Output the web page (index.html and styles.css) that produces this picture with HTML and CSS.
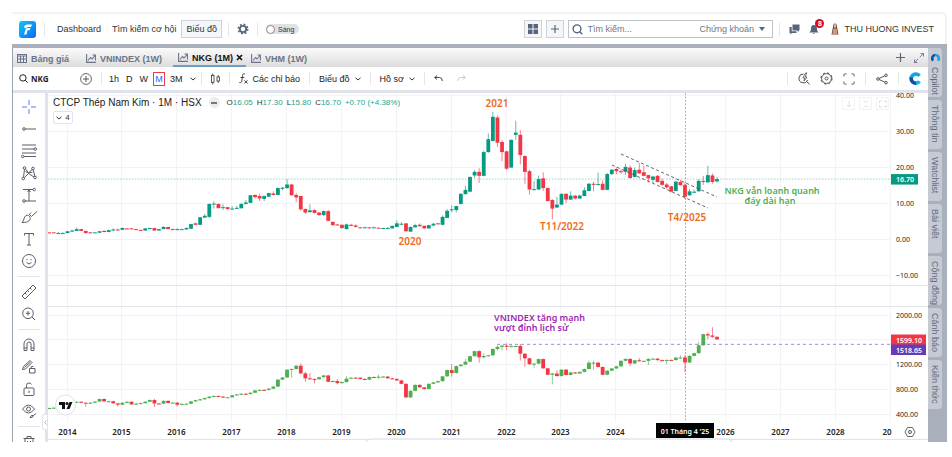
FILE: index.html
```html
<!DOCTYPE html>
<html lang="vi">
<head>
  <meta charset="UTF-8">
  <meta name="viewport" content="width=device-width, initial-scale=1">
  <title>NKG (1M) - Biểu đồ</title>
  <link rel="stylesheet" href="styles.css">
</head>
<body>
  <div class="app">
    <!-- Top bar -->
    <header class="topbar">
      <a href="#" class="logo" aria-label="Trang chủ">
        <svg width="17" height="17" viewBox="0 0 17 17">
          <defs>
            <linearGradient id="logo-bg" x1="0" y1="0" x2="1" y2="1">
              <stop offset="0" stop-color="#12c4fb"/>
              <stop offset="1" stop-color="#0a6cf5"/>
            </linearGradient>
          </defs>
          <rect width="17" height="17" rx="3" fill="url(#logo-bg)"/>
          <path d="M5 6.500C5.300 4.500 6.500 3.500 8.500 3.500H13L12 6H8.500L7 7.500ZM6.500 8.500L8 7H11.500L10.500 9.300H8.500L7.500 13.500H5Z" fill="#fff"/>
        </svg>
      </a>
      <span class="divider"></span>
      <nav class="main-nav">
        <a href="#">Dashboard</a>
        <a href="#">Tìm kiếm cơ hội</a>
        <a href="#" class="current">Biểu đồ</a>
      </nav>
      <span class="divider"></span>
      <button class="icon-button gear" aria-label="Cài đặt">
        <svg width="12" height="12" viewBox="0 0 12 12" fill="none" stroke="#56657f">
          <circle cx="6" cy="6" r="3.200" stroke-width="1.800"/>
          <circle cx="6" cy="6" r="4.700" stroke-width="1.600" stroke-dasharray="1.850 1.840"/>
        </svg>
      </button>
      <span class="divider"></span>
      <label class="theme"><input type="checkbox"><span>Sáng</span></label>

      <div class="topbar-right">
        <button class="square" aria-label="Bố cục">
          <svg width="10" height="10" viewBox="0 0 10 10" fill="#56657f">
            <rect width="4.500" height="4.500"/><rect x="5.500" width="4.500" height="4.500"/>
            <rect y="5.500" width="4.500" height="4.500"/><rect x="5.500" y="5.500" width="4.500" height="4.500"/>
          </svg>
        </button>
        <button class="square" aria-label="Thêm">
          <svg width="8" height="8" viewBox="0 0 8 8" stroke="#56657f" stroke-width="1.200"><path d="M4 0V8M0 4H8"/></svg>
        </button>
        <div class="search">
          <svg width="11" height="11" viewBox="0 0 11 11" fill="none" stroke="#56657f" stroke-width="1.400"><circle cx="5" cy="4.800" r="3.900"/><path d="M7.500 7.500L10.300 10.300"/></svg>
          <input type="text" placeholder="Tìm kiếm..." aria-label="Tìm kiếm">
          <select aria-label="Loại"><option>Chứng khoán</option></select>
          <svg class="caret" width="6" height="4" viewBox="0 0 6 4" fill="#56657f"><path d="M0 0H6L3 4Z"/></svg>
        </div>
        <span class="divider"></span>
        <button class="icon-button chat" aria-label="Tin nhắn">
          <svg width="11" height="11" viewBox="0 0 11 11" fill="#56657f"><path d="M3.500 0.500H10.500V6.500H9.500V8L8 6.500H3.500Z"/><path d="M0.500 3H2.700V7.300H7.500V9H3L1.500 10.500V9H0.500Z"/></svg>
        </button>
        <button class="icon-button bell" aria-label="Thông báo">
          <svg width="10" height="11" viewBox="0 0 10 11" fill="#56657f"><path d="M5 1C7.300 1 8 2.800 8 4.500C8 6.800 8.600 7.500 9.600 8.500H0.400C1.400 7.500 2 6.800 2 4.500C2 2.800 2.700 1 5 1ZM3.800 9.300H6.200C6 10.300 4 10.300 3.800 9.300Z"/></svg>
          <span class="badge">8</span>
        </button>
        <button class="user">
          <svg width="10" height="12" viewBox="0 0 10 12"><path d="M3 4Q3 0.500 5 0.500Q7 0.500 7 4L8.500 11.500H1.500Z" fill="#5b4038"/><ellipse cx="5" cy="3" rx="1.400" ry="1.900" fill="#dfb49a"/><path d="M3.200 6Q5 4.500 6.800 6L7.500 11.500H2.300Z" fill="#d19a7c"/></svg>
          THU HUONG INVEST
        </button>
      </div>
    </header>

    <div class="workspace">
      <main class="board">
        <!-- Symbol tabs -->
        <div class="tabs">
          <a href="#" class="tab first">
            <svg width="10" height="9" viewBox="0 0 10 9" fill="none" stroke="#6a7488"><rect x="0.500" y="0.500" width="9" height="8"/><path d="M0 2H10M0 5H10M3.500 2V9M6.500 2V9"/></svg>
            Bảng giá
          </a>
          <a href="#" class="tab">
            <svg width="10" height="9" viewBox="0 0 10 9"><use href="#tab-chart"/></svg>
            VNINDEX (1W)
          </a>
          <a href="#" class="tab active">
            <svg width="10" height="9" viewBox="0 0 10 9"><use href="#tab-chart"/></svg>
            NKG (1M)
            <svg class="close" width="7" height="7" viewBox="0 0 7 7" stroke="#111" stroke-width="1.600"><path d="M1 1L6 6M6 1L1 6"/></svg>
          </a>
          <a href="#" class="tab">
            <svg width="10" height="9" viewBox="0 0 10 9"><use href="#tab-chart"/></svg>
            VHM (1W)
          </a>
          <div class="tabs-right">
            <button class="icon-button" aria-label="Thêm tab"><svg width="9" height="9" viewBox="0 0 9 9" stroke="#5c6679" stroke-width="1.200"><path d="M4.500 0V9M0 4.500H9"/></svg></button>
            <button class="icon-button" aria-label="Phóng to"><svg width="10" height="10" viewBox="0 0 10 10" fill="none" stroke="#6a7488" stroke-width="0.900"><path d="M6.500 0.500H9.500V3.500M9.500 0.500L5.800 4.200M0.500 6.500V9.500H3.500M0.500 9.500L4 6"/></svg></button>
          </div>
        </div>

        <!-- Chart toolbar -->
        <div class="toolbar">
          <button class="symbol"><svg width="9" height="9" viewBox="0 0 9 9" fill="none" stroke="#222" stroke-width="1"><circle cx="3.900" cy="3.900" r="3.200"/><path d="M6.200 6.200L8.700 8.700"/></svg>NKG</button>
          <button class="compare" aria-label="So sánh"><svg width="12" height="12" viewBox="0 0 12 12" fill="none" stroke="#444"><circle cx="6" cy="6" r="5.400" stroke-width="0.800"/><path d="M6 3V9M3 6H9" stroke-width="0.900"/></svg></button>
          <span class="divider"></span>
          <div class="intervals">
            <button>1h</button>
            <button>D</button>
            <button>W</button>
            <button class="selected">M</button>
            <button>3M</button>
            <button aria-label="Khung khác"><svg width="6" height="4" viewBox="0 0 6 4"><use href="#chevron"/></svg></button>
          </div>
          <span class="divider"></span>
          <button class="pad" aria-label="Kiểu nến"><svg width="9" height="12" viewBox="0 0 9 12" fill="none" stroke="#333" stroke-width="0.800"><rect x="0.500" y="2.500" width="2.500" height="7"/><path d="M1.700 0.500V2.500M1.700 9.500V11.500M7.200 2V4M7.200 8V10"/><rect x="6" y="4" width="2.500" height="4"/></svg></button>
          <span class="divider"></span>
          <button class="pad"><svg width="9" height="11" viewBox="0 0 9 11" fill="none" stroke="#333" stroke-width="0.900"><path d="M6 1C4.500 0.300 3.700 1 3.500 2.500L2.800 8C2.600 9.500 1.500 10 0.300 9.500M1.500 4.500H5.300M5.500 7.300L8.500 10.500M8.500 7.300L5.500 10.500"/></svg>Các chỉ báo</button>
          <span class="divider"></span>
          <button class="pad">Biểu đồ<svg width="6" height="4" viewBox="0 0 6 4"><use href="#chevron"/></svg></button>
          <span class="divider"></span>
          <button class="pad">Hồ sơ<svg width="6" height="4" viewBox="0 0 6 4"><use href="#chevron"/></svg></button>
          <span class="divider"></span>
          <button class="pad" aria-label="Hoàn tác"><svg width="9" height="7" viewBox="0 0 9 7" fill="none" stroke="#333" stroke-width="0.900"><path d="M3 0.500L0.700 2.500L3 4.500M0.700 2.500H5.500Q8.300 2.500 8.300 6"/></svg></button>
          <button class="redo" aria-label="Làm lại"><svg width="9" height="7" viewBox="0 0 9 7" fill="none" stroke="#c3c5cb" stroke-width="0.900"><path d="M6 0.500L8.300 2.500L6 4.500M8.300 2.500H3.500Q0.700 2.500 0.700 6"/></svg></button>

          <div class="toolbar-right">
            <span class="divider"></span>
            <button aria-label="Tìm nhanh"><svg width="12" height="13" viewBox="0 0 12 13" fill="none" stroke="#333" stroke-width="0.900"><path d="M5.500 2A4.400 4.400 0 1 0 9.500 8M8.500 9.500L11.500 12.300"/><path d="M7.800 0.800L4.800 6H6.800L6 9L9 5H7.200L8.700 0.800Z" stroke-width="0.700"/></svg></button>
            <button aria-label="Cài đặt biểu đồ"><svg width="13" height="13" viewBox="0 0 13 13" fill="none" stroke="#333"><circle cx="6.500" cy="6.500" r="4.900" stroke-width="0.800"/><circle cx="6.500" cy="6.500" r="5.600" stroke-width="0.900" stroke-dasharray="2.200 2.198"/><circle cx="6.500" cy="6.500" r="1.500" stroke-width="0.800"/></svg></button>
            <button aria-label="Toàn màn hình"><svg width="12" height="12" viewBox="0 0 12 12" fill="none" stroke="#444" stroke-width="0.900"><path d="M0.800 3.500V2.300Q0.800 0.800 2.300 0.800H3.500M8.500 0.800H9.700Q11.200 0.800 11.200 2.300V3.500M11.200 8.500V9.700Q11.200 11.200 9.700 11.200H8.500M3.500 11.200H2.300Q0.800 11.200 0.800 9.700V8.500"/></svg></button>
            <span class="divider"></span>
            <button aria-label="Chia sẻ"><svg width="12" height="12" viewBox="0 0 12 12" fill="none" stroke="#444" stroke-width="0.900"><circle cx="2" cy="6" r="1.300"/><circle cx="10" cy="2.300" r="1.300"/><circle cx="10" cy="9.700" r="1.300"/><path d="M3.200 5.400L8.800 2.900M3.200 6.600L8.800 9.100"/></svg></button>
            <span class="divider"></span>
            <button aria-label="Copilot"><svg width="13" height="13" viewBox="0 0 13 13" fill="none" stroke-width="3.600"><path d="M10.500 3.800A4.600 4.600 0 0 0 2.300 6.500" stroke="#12a5e0"/><path d="M2.300 5.500A4.600 4.600 0 0 0 7.500 11.100" stroke="#0d4fa8"/><path d="M7 11.100A4.600 4.600 0 0 0 10.500 9.200" stroke="#14b4e8"/></svg></button>
          </div>
        </div>

        <div class="chart-area">
          <!-- Drawing tools -->
          <div class="tools">
            <button aria-label="Con trỏ"><svg width="16" height="16" viewBox="0 0 16 16"><path d="M8 1V6M8 10V15M1 8H6M10 8H15"/></svg></button>
            <button aria-label="Đường xu hướng"><svg width="16" height="16" viewBox="0 0 16 16"><circle cx="3" cy="8" r="1.300"/><path d="M4.300 8H15"/></svg></button>
            <button aria-label="Fibonacci"><svg width="16" height="16" viewBox="0 0 16 16"><path d="M1 2H15M1 6H13M1 10H15M3 13.500H15"/><circle cx="14.200" cy="6" r="1.300"/><circle cx="1.700" cy="13.500" r="1.300"/></svg></button>
            <button aria-label="Mô hình"><svg width="16" height="16" viewBox="0 0 16 16"><path d="M3.500 4.300L2.500 12.200M4.500 4L7.500 7.800L11.200 4.500M12.300 4.800L13.800 11.200M3.300 12.700L7.500 8.500L13 12M4.500 6.500L7.500 8L11.500 7"/><circle cx="3.500" cy="3" r="1.300"/><circle cx="12" cy="3.500" r="1.300"/><circle cx="2.300" cy="13.500" r="1.300"/><circle cx="14" cy="12.500" r="1.300"/></svg></button>
            <button aria-label="Dự báo"><svg width="16" height="16" viewBox="0 0 16 16"><path d="M2 2.500H12M4 14H15M8 3V14M6.500 5L8 3L9.500 5"/><circle cx="13.200" cy="2.500" r="1.300"/><circle cx="3" cy="14" r="1.300"/></svg></button>
            <button aria-label="Cọ vẽ"><svg width="16" height="16" viewBox="0 0 16 16"><path d="M1 13.500C3 12.500 2.500 8 5 6.500C7.500 5.500 10 8 9 10.500C7.500 13.500 4 13.500 1 13.500ZM9 6L10.500 7.500L16 2.500M8 6L10 3.500"/></svg></button>
            <button aria-label="Văn bản"><svg width="16" height="16" viewBox="0 0 16 16"><path d="M3.500 4.500V2.500H12.500V4.500M8 2.500V14M6 14H10"/></svg></button>
            <button aria-label="Biểu tượng"><svg width="16" height="16" viewBox="0 0 16 16"><circle cx="8" cy="8" r="6.500"/><path d="M5.500 9.500Q8 12.500 10.500 9.500M6 6V7.300M10 6V7.300"/></svg></button>
            <hr>
            <button aria-label="Thước"><svg width="16" height="16" viewBox="0 0 16 16"><path d="M1 12L12 1L15 4L4 15ZM4 9L5.500 10.500M6.500 6.500L8 8M9 4L10.500 5.500"/></svg></button>
            <button aria-label="Phóng to"><svg width="16" height="16" viewBox="0 0 16 16"><circle cx="7" cy="7.300" r="5.300"/><path d="M11 11L14 14M7 5V9.500M4.800 7.300H9.200"/></svg></button>
            <hr>
            <button aria-label="Nam châm"><svg width="16" height="16" viewBox="0 0 16 16"><path d="M3 13.500V7A5 5 0 0 1 13 7V13.500H10V7A2 2 0 0 0 6 7V13.500ZM3 11H6M10 11H13"/></svg></button>
            <button aria-label="Giữ chế độ vẽ"><svg width="16" height="16" viewBox="0 0 16 16"><path d="M1.500 10.500L2.500 7.500L9 1.500L11 3.500L4.500 10ZM3.500 8.500L9.500 3M8.500 9.500H14V14H8.500ZM9.800 9.500Q9.800 6.500 12.300 7.500"/></svg></button>
            <button aria-label="Khóa"><svg width="16" height="16" viewBox="0 0 16 16"><rect x="3" y="7" width="10" height="7.500" rx="1"/><path d="M5.500 7V4.500Q5.500 2 8 2Q10 2 10.500 3.500M8 9.500V12"/></svg></button>
            <button aria-label="Ẩn hình vẽ"><svg width="16" height="16" viewBox="0 0 16 16"><path d="M1.500 6Q7.500 -2 13.500 6Q7.500 14 1.500 6ZM9 14.500Q10 11.500 12.500 12.500Q12 15 9 14.500ZM12.500 12.500L15 10.500"/><circle cx="7.500" cy="6" r="2"/></svg></button>
            <hr>
            <button aria-label="Xóa"><svg width="16" height="16" viewBox="0 0 16 16"><path d="M2.500 4.500H13.500M6 4.500V2.500H10V4.500M4 4.500V14H12V4.500M6.500 7V12M9.500 7V12"/></svg></button>
          </div>

          <div class="chart">
            <svg id="plot" viewBox="0 0 880 349" role="img" aria-label="NKG và VNINDEX"></svg>
            <div class="legend">
              <span class="legend-name">CTCP Thép Nam Kim · 1M · HSX</span>
              <span class="legend-chip"></span>
              <span class="ohlc">O<b>16.05</b></span>
              <span class="ohlc">H<b>17.30</b></span>
              <span class="ohlc">L<b>15.80</b></span>
              <span class="ohlc">C<b>16.70</b></span>
              <span class="ohlc"><b>+0.70 (+4.38%)</b></span>
            </div>
            <button class="collapse"><svg width="6" height="4" viewBox="0 0 6 4"><use href="#chevron"/></svg>4</button>
            <div class="pane-buttons">
              <button aria-label="Xuống"><svg width="8" height="8" viewBox="0 0 8 8"><path d="M4 1V7M2 5L4 7L6 5"/></svg></button>
              <button aria-label="Thu gọn"><svg width="8" height="8" viewBox="0 0 8 8"><path d="M2 0.500L4 2.500L6 0.500M2 7.500L4 5.500L6 7.500"/></svg></button>
              <button aria-label="Mở rộng"><svg width="8" height="8" viewBox="0 0 8 8"><path d="M0.500 3V1H3M5 1H7.500V3M7.500 5V7H5M3 7H0.500V5"/></svg></button>
            </div>
            <button class="handle" aria-label="Ẩn thanh công cụ"><svg width="3" height="5" viewBox="0 0 3 5" fill="none" stroke="#9aa0ad" stroke-width="0.800"><path d="M2.500 0.500L0.500 2.500L2.500 4.500"/></svg></button>
          </div>
        </div>
      </main>

      <!-- Right side panel tabs -->
      <aside class="side">
        <a href="#"><svg width="9" height="9" viewBox="0 0 9 9" fill="none" stroke-width="2.600"><path d="M2.200 7.500A3.200 3.200 0 0 1 4.500 2" stroke="#0d4fa8"/><path d="M4.300 2A3.200 3.200 0 0 1 6.800 7.500" stroke="#12a5e0"/></svg>Copilot</a>
        <a href="#">Thông tin</a>
        <a href="#">Watchlist</a>
        <a href="#">Bài viết</a>
        <a href="#">Cộng đồng</a>
        <a href="#">Cảnh báo</a>
        <a href="#">Kiến thức</a>
      </aside>
    </div>
  </div>

  <svg class="sprite" width="0" height="0">
    <symbol id="chevron" viewBox="0 0 6 4"><path d="M0.500 0.800L3 3L5.500 0.800" fill="none" stroke="#333" stroke-width="1"/></symbol>
    <symbol id="tab-chart" viewBox="0 0 10 9"><path d="M0.600 0V8.400H10M2 6.500L4.500 3.500L6 5L9 1.500M6.500 1H9.400V6.500" fill="none" stroke="#6a7488" stroke-width="1.100"/></symbol>
  </svg>
  <script src="chart.js"></script>
</body>
</html>
```

FILE: styles.css
```css
* {
  box-sizing: border-box;
}
body {
  margin: 0;
  background: #fff;
  color: #333;
  font-family: "Liberation Sans", Arial, sans-serif;
  font-size: 9px;
}
a {
  color: inherit;
  text-decoration: none;
}
button {
  display: flex;
  align-items: center;
  justify-content: center;
  padding: 0;
  border: none;
  background: none;
  color: inherit;
  font: inherit;
  cursor: pointer;
}
svg {
  display: block;
  flex: none;
}
.sprite {
  position: absolute;
}
.divider {
  flex: none;
  width: 1px;
  height: 13px;
  background: #e4e6ea;
}
.app {
  margin: 12px 5px 12px 12px;
}

/* Top bar */
.topbar {
  display: flex;
  align-items: center;
  height: 32px;
  padding: 0 11px 0 7px;
  border-top: 2px solid #f3f3f4;
  border-right: 2px solid #f3f3f4;
  border-radius: 0 5px 0 0;
}
.topbar .divider {
  margin: 0 8px;
}
.main-nav {
  display: flex;
  align-items: center;
  gap: 11px;
  margin-left: 4px;
}
.main-nav .current {
  margin: 0 -2px 0 -6px;
  padding: 3px 4px;
  border: 1px solid #cfd2d7;
  background: #f5f6f8;
}
.theme {
  display: flex;
  align-items: center;
  gap: 3px;
  width: 33px;
  height: 10px;
  border-radius: 5px;
  background: #dfe1e5;
  font-size: 7px;
}
.theme input {
  appearance: none;
  width: 9px;
  height: 9px;
  margin: 0;
  border: 1px solid #888;
  border-radius: 50%;
  background: #fff;
}
.topbar-right {
  display: flex;
  align-items: center;
  margin-left: auto;
}
.square {
  width: 18px;
  height: 18px;
  margin-right: 4px;
  border: 1px solid #cfd2d7;
  background: #f5f6f8;
}
.search {
  display: flex;
  align-items: center;
  width: 205px;
  height: 18px;
  padding: 0 7px 0 3px;
  border: 1px solid #bfc3ca;
}
.search input {
  flex: 1;
  min-width: 0;
  margin-left: 4px;
  padding: 0;
  border: none;
  background: none;
  font: inherit;
  outline: none;
}
.search input::placeholder {
  color: #6f7888;
}
.search select {
  appearance: none;
  padding: 0;
  border: none;
  background: none;
  color: #6f7888;
  font: inherit;
}
.search .caret {
  margin-left: 5px;
}
.topbar-right .divider {
  margin: 0 9px 0 6px;
}
.bell {
  position: relative;
  margin: 0 9px;
}
.badge {
  position: absolute;
  top: -5px;
  right: -5px;
  width: 9px;
  height: 9px;
  border-radius: 50%;
  background: #d40f16;
  color: #fff;
  font-size: 7px;
  font-weight: bold;
  line-height: 9px;
}
.user {
  gap: 4px;
  margin-left: 2px;
}

/* Workspace */
.workspace {
  display: grid;
  grid-template-columns: 1fr 19px;
  border-top: 4px solid #a9afbb;
  background: #a9afbb;
}
.board {
  min-width: 0;
  border-left: 1px solid #9aa1af;
  background: #fff;
}
.tabs {
  display: flex;
  height: 19px;
  background: linear-gradient(#fbfbfb, #dcdcdc);
  color: #6a7488;
  font-weight: bold;
}
.tab {
  display: flex;
  align-items: center;
  gap: 4px;
  padding: 2px 5px 0;
}
.tab.first {
  margin-right: 7px;
  padding-left: 4px;
}
.tab.active {
  margin-left: 6px;
  padding: 2px 3px 0 5px;
  border-bottom: 2px solid #6b9fc4;
  color: #111;
}
.tab.active .close {
  margin-left: -1px;
}
.tabs-right {
  display: flex;
  gap: 9px;
  margin-left: auto;
  padding-right: 4px;
}

/* Chart toolbar */
.toolbar {
  display: flex;
  align-items: center;
  height: 23px;
  color: #222;
}
.symbol {
  gap: 3px;
  width: 67px;
  padding-left: 6px;
  justify-content: flex-start;
  font: bold 8px "Noto Sans", sans-serif;
}
.compare {
  margin-right: 9px;
}
.intervals {
  display: flex;
  align-items: center;
  gap: 7px;
  padding: 0 5px 0 7px;
}
.intervals .selected {
  width: 12px;
  height: 14px;
  margin: 0 -2px;
  border: 1px solid #e93c46;
  color: #2962ff;
}
.pad {
  gap: 5px;
  padding: 0 9px;
}
.redo {
  margin-left: 5px;
}
.toolbar-right {
  display: flex;
  align-items: center;
  gap: 10px;
  margin-left: auto;
  padding-right: 6px;
}

/* Chart */
.chart-area {
  display: grid;
  grid-template-columns: 35px 1fr;
  border-top: 3px solid #e0e3eb;
}
.tools {
  display: flex;
  flex-direction: column;
  height: 0;
  min-height: 100%;
  padding-top: 3px;
  border-right: 3px solid #e0e3eb;
  overflow: hidden;
}
.tools button {
  flex: none;
  height: 22px;
}
.tools svg {
  fill: none;
  stroke: #5a5d66;
}
.tools button:first-child svg {
  stroke: #5b7cff;
}
.tools hr {
  flex: none;
  width: 22px;
  height: 1px;
  margin: 4px auto;
  border: none;
  background: #e0e3eb;
}
.chart {
  position: relative;
  min-width: 0;
}
#plot {
  width: 100%;
  height: auto;
  font-family: "Noto Sans", sans-serif;
}
.grid {
  stroke: #f3f3f5;
}
.pane-line {
  stroke: #e0e3eb;
}
.axis-text {
  fill: #222;
  font-size: 7px;
}
.axis-text.year {
  font-size: 8px;
  font-weight: 600;
  text-anchor: middle;
}
.tag-text {
  fill: #fff;
  font-size: 7px;
  font-weight: 600;
}
.note {
  font-size: 9px;
  font-weight: 600;
}
.orange {
  fill: #ee6a1c;
  font-size: 10px;
  text-anchor: middle;
}
.green {
  fill: #4caf50;
  text-anchor: middle;
}
.purple {
  fill: #9c27b0;
}
.legend {
  display: flex;
  align-items: center;
  gap: 4px;
  position: absolute;
  top: 4px;
  left: 5px;
  white-space: nowrap;
}
.legend-name {
  margin-right: 3px;
  color: #222;
  font-size: 10px;
}
.legend-chip {
  display: flex;
  align-items: center;
  justify-content: center;
  width: 11px;
  height: 11px;
  margin-right: 3px;
  border-radius: 50%;
  background: #ececee;
}
.legend-chip::after {
  width: 6px;
  height: 2px;
  background: #777;
  content: "";
}
.ohlc {
  font-size: 8px;
}
.ohlc b {
  color: #22a58e;
  font-weight: normal;
}
.collapse {
  gap: 3px;
  position: absolute;
  top: 18px;
  left: 5px;
  width: 20px;
  height: 13px;
  border: 1px solid #e0e3eb;
  border-radius: 2px;
  background: #fff;
  font-size: 8px;
}
.pane-buttons {
  display: flex;
  gap: 4px;
  position: absolute;
  top: 4px;
  right: 39px;
}
.pane-buttons button {
  width: 13px;
  height: 13px;
  border: 1px solid #f3f3f5;
}
.pane-buttons svg {
  fill: none;
  stroke: #dddfe3;
}
.handle {
  position: absolute;
  bottom: 12px;
  left: -6px;
  width: 6px;
  height: 16px;
  border: 1px solid #e0e3eb;
  border-radius: 2px 0 0 2px;
  background: #fff;
}

/* Right side tabs */
.side {
  display: flex;
  flex-direction: column;
  gap: 3px;
  padding-right: 5px;
}
.side a {
  display: flex;
  align-items: center;
  gap: 5px;
  height: 49px;
  padding-top: 5px;
  border-radius: 0 3px 3px 0;
  background: #c5cad3;
  color: #626c7e;
  font-size: 9px;
  line-height: 14px;
  writing-mode: vertical-rl;
  white-space: nowrap;
}
```

FILE: chart.js
```javascript
const plot = document.getElementById('plot');

// monthly bars, first one is September 2013
const FIRST = -4;
const AXIS = 843;
const xOf = i => 19.5 + 4.574 * i;
const priceY = p => 146.2 - 3.6 * p;
const indexY = v => 345.5 - 0.062 * v;

// open, high, low, close
const nkg = [
  [1.9,1.9,1.8,1.8],[1.9,1.9,1.8,1.8],[1.6,2,1.6,1.7],[1.6,1.9,1.6,1.7],
  [1.7,2.3,1.7,2.2],[2.1,2.6,2.1,2.4],[2.3,3.2,2.3,2.8],[2.8,2.9,2.3,2.3],[2.3,2.4,1.6,1.7],[1.9,2,1.8,1.8],[1.8,1.9,1.8,1.9],[1.8,2.3,1.8,2.2],[2.3,2.5,1.9,2],[2,2.7,1.9,2.5],[2.4,3,2.4,2.7],[2.7,2.9,2.5,2.6],
  [2.6,3.3,2.6,3.1],[3,3.1,2.9,2.9],[3,3.1,2.8,2.9],[2.8,2.9,2.6,2.6],[2.6,2.6,2.5,2.5],[2.4,3.1,2.4,3],[2.8,3.2,2.8,3.1],[3.1,3.2,2.4,2.4],[2.4,2.9,2.4,2.8],[2.8,3.6,2.8,3.4],[3.4,3.4,2.8,2.8],[2.8,3,2.6,2.7],
  [2.7,3,2.5,2.8],[2.7,2.9,2.7,2.8],[2.7,3.3,2.7,3.1],[2.9,4.3,2.8,4.2],[4.4,4.6,3.9,4],[4,6.2,4,6.1],[6,7,6,6.5],[6.2,9.9,5.9,9.8],[9.8,10.5,8.5,9.9],[9.8,9.9,8.6,8.6],[8.7,9.7,8.1,8.9],[8.9,9,8.1,8.4],
  [8.4,9.2,8.4,8.5],[8.6,9.3,8.5,8.7],[8.6,10,8.5,9.8],[9.8,10.9,9.6,10.2],[10.1,12.3,10,12.2],[12.3,12.4,11.3,11.7],[12,12.7,10.6,11.3],[11.2,12.1,10.6,12],[11.8,12.9,11.8,12.8],[12.7,13.3,12.2,12.3],[12.3,14.4,12.2,14.2],[14,14.5,13.6,14.3],
  [14.2,16.7,14,15.2],[15.2,15.3,12.1,12.2],[12.3,12.8,10.3,11.6],[12,12.1,7.9,8.3],[8.4,8.5,7,7.4],[7.5,9.7,7.5,8],[8.1,8.3,7.1,7.3],[7.4,7.5,6.5,6.7],[6.7,8,6.4,7.8],[7.8,8.2,5,5.1],[4.8,5,3.7,3.9],[4.1,4.3,3.8,3.9],
  [4,4.1,2.9,3.1],[2.8,4.3,2.7,4.1],[4,4.3,3.6,3.7],[3.8,4.1,3.3,3.4],[3.3,3.4,3.1,3.2],[3.2,3.5,3.2,3.3],[3.3,3.3,3,3.1],[3.2,3.5,3.2,3.3],[3.2,3.2,2.9,3],[2.9,3.2,2.8,3.1],[3,3.3,3,3.1],[3,3.8,2.9,3.7],
  [3.4,5.2,3.4,4.4],[4.1,4.7,4,4.3],[4.4,4.4,2.1,2.2],[2.1,3.5,2.1,3.4],[3.3,4.3,3.3,3.9],[4,4.4,3.5,3.6],[3.7,3.8,2.9,3],[3,4,3,3.9],[3.8,4.5,3.8,4.3],[4.4,4.5,4.2,4.2],[4,6.6,3.9,6.2],[5.9,8.4,5.9,7.9],
  [8.2,9.4,7.5,8.3],[8.1,9.3,7.4,9.2],[9.8,12.8,9.6,12.6],[12.5,14.8,12.4,13.7],[13.2,17.4,13.1,17.3],[17.7,19.2,17,18.7],[18.7,19.7,15.6,17.6],[17.6,24.6,17.5,24.2],[24.2,29.4,24,27.8],[27.3,35.4,27.1,34],[33.8,34.4,25.6,26.8],[27,27.5,21.6,24.2],
  [24.4,24.6,19.2,19.6],[19.9,27.7,19.9,27.6],[29,32.9,27.6,29.6],[29,30.3,20.8,23.4],[23.1,23.3,15.4,18.7],[18.9,19.3,12.4,13.8],[13.7,16.2,13.6,13.9],[13.8,17.7,13.7,16.7],[16.9,18.6,13.4,14.2],[14.2,14.4,10.5,10.6],[10.9,11.1,5.5,8.5],[8.8,11.8,8.7,9.6],
  [9.6,12.7,9.5,12.6],[12.6,12.8,10,11],[11,13.3,10.9,12.1],[12.1,12.3,11,11.3],[11.3,12.4,11.2,12.1],[12,14.5,11.9,13.6],[13.4,15.6,13.3,15.4],[15.4,16,13.3,15.1],[15.2,18.5,15.1,15.3],[15.4,16.4,13.6,13.7],[13.7,18.4,13.6,18.1],[18.1,19.5,17.8,19.3],
  [19.5,20,18.1,18.9],[18.9,19.4,18.2,18.6],[18.7,20.9,17.8,20.1],[19.9,20.5,16.8,17],[17.3,19.9,17.1,19.2],[19.3,21.2,18.1,18.3],[18.6,20.4,17.4,17.6],[17.8,17.9,15.8,16.9],[16.5,17.6,15.6,17.4],[17.6,17.8,15.7,15.9],[16.2,16.9,14.8,15.1],[15.2,15.6,14,14.4],
  [14.7,14.8,13,13.2],[13.4,16.2,13.3,16],[15.9,16.5,14.9,15],[15.1,15.8,11.2,11.8],[12.2,14,12,13.3],[12.9,13.8,12.8,13.2],[13.3,16.7,13.2,16.2],[16.2,17.6,15.1,15.9],[15.8,20.4,15.7,17.8],[17.7,18.3,15.4,15.9],[16.05,17.3,15.8,16.7]
];

const vnindex = [
  492, 497, 508, 505,
  557, 586, 592, 578, 562, 578, 596, 637, 599, 601, 567, 546,
  576, 593, 551, 562, 570, 593, 621, 565, 563, 607, 573, 579,
  545, 559, 561, 598, 618, 632, 652, 675, 686, 676, 665, 665,
  697, 711, 722, 718, 738, 776, 784, 783, 804, 837, 950, 984,
  1110, 1121, 1174, 1050, 971, 961, 956, 989, 1017, 915, 927, 893,
  911, 965, 981, 980, 960, 950, 992, 984, 997, 999, 971, 961,
  937, 882, 663, 769, 865, 825, 798, 882, 905, 925, 1003, 1104,
  1057, 1168, 1191, 1239, 1328, 1409, 1310, 1331, 1342, 1444, 1478, 1498,
  1479, 1490, 1492, 1367, 1293, 1198, 1207, 1281, 1132, 1028, 1048, 1007,
  1111, 1025, 1065, 1049, 1075, 1120, 1223, 1224, 1154, 1028, 1094, 1130,
  1164, 1253, 1284, 1210, 1262, 1245, 1252, 1284, 1288, 1264, 1251, 1267,
  1265, 1305, 1307, 1226, 1333, 1376, 1503, 1682, 1662, 1640, 1599
];

// months where the wick is clearly longer than the body
const wicks = {
  4: [580, 515], 11: [570, 515], 19: [640, 510], 24: [580, 515],
  49: [1130, 976], 51: [1211, 1040], 52: [1075, 915], 53: [1055, 950],
  54: [965, 890], 59: [960, 870], 61: [1003, 900], 68: [1030, 960],
  84: [1200, 1000], 87: [1286, 1190], 90: [1425, 1225], 91: [1375, 1290],
  94: [1500, 1420], 95: [1512, 1420], 96: [1534, 1425], 97: [1516, 1470],
  99: [1524, 1260], 100: [1380, 1156], 102: [1220, 1140], 106: [1060, 873],
  107: [1100, 1000], 114: [1256, 1150], 115: [1255, 1110], 123: [1290, 1165],
  125: [1300, 1240], 127: [1290, 1185], 131: [1275, 1198], 134: [1342, 1290],
  135: [1345, 1073], 138: [1560, 1370], 140: [1711, 1600], 141: [1795, 1620]
};

let out = '';
const line = (x1, y1, x2, y2, attrs) => out += `<line x1="${x1}" y1="${y1}" x2="${x2}" y2="${y2}" ${attrs}/>`;
const text = (x, y, cls, str) => out += `<text x="${x}" y="${y}" class="${cls}">${str}</text>`;

function candle(i, y, bar, up, down) {
  const [o, h, l, c] = bar;
  const color = c >= o ? up : down;
  const x = xOf(i);
  const top = y(Math.max(o, c));
  const height = Math.max(1, y(Math.min(o, c)) - top);
  line(x, y(h), x, y(l), `stroke="${color}" stroke-width="0.8" stroke-opacity="0.8"`);
  out += `<rect x="${x - 1.9}" y="${top}" width="3.8" height="${height}" fill="${color}"/>`;
}

function tag(y, color, str) {
  out += `<rect x="${AXIS}" y="${y - 5}" width="${str.length > 5 ? 35 : 27}" height="10.500" fill="${color}"/>`;
  text(AXIS + 5, y + 3, 'tag-text', str);
}

// grid
for (let year = 2014; year <= 2029; year++) {
  const x = Math.round(xOf((year - 2014) * 12)) - 0.5;
  line(x, 0, x, 329, 'class="grid"');
  // the crosshair date covers 2025
  if (year < 2029 && year !== 2025) text(x, 342, 'axis-text year', year);
}
text(839, 342, 'axis-text year', '20');
for (let p = 40; p >= -10; p -= 10) {
  const y = Math.round(priceY(p)) + 0.5;
  line(0, y, AXIS, y, 'class="grid"');
  text(AXIS + 5, y + 2, 'axis-text', (p < 0 ? '−' : '') + Math.abs(p).toFixed(2));
}
for (let v = 2000; v >= 400; v -= 400) {
  const y = Math.round(indexY(v)) + 0.5;
  line(0, y, AXIS, y, 'class="grid"');
  if (v !== 1600) text(AXIS + 5, y + 2, 'axis-text', v.toFixed(2));
}
line(0, 192.5, 880, 192.5, 'class="pane-line"');
line(0, 213.5, 880, 213.5, 'class="pane-line"');
line(0, 346.5, 880, 346.5, 'class="pane-line"');
out += '<path d="M318 349Q319 346 322 346H680Q683 346 684 349" fill="#fff" stroke="#d5d8df"/>';

// last price, former top and crosshair
line(0, priceY(16.7), AXIS, priceY(16.7), 'stroke="#089981" stroke-opacity="0.5" stroke-width="0.8" stroke-dasharray="1.500 1.500"');
line(449, indexY(1518.65), AXIS, indexY(1518.65), 'stroke="#673ab7" stroke-opacity="0.6" stroke-dasharray="3 3"');
line(637.5, 0, 637.5, 329, 'stroke="#9a9da5" stroke-width="0.8" stroke-dasharray="2 1.500"');

nkg.forEach((bar, n) => candle(n + FIRST, priceY, bar, '#089981', '#f23645'));
vnindex.forEach((close, n) => {
  const i = n + FIRST;
  const open = n ? vnindex[n - 1] : 480;
  const [high, low] = wicks[i] || [Math.max(open, close) + 8, Math.min(open, close) - 8];
  candle(i, indexY, [open, high, low, close], '#4caf50', '#f23645');
});

// falling channel
line(573, 61, 669, 104, 'stroke="#555" stroke-width="0.9" stroke-dasharray="3 2.500"');
line(564, 72, 660, 115, 'stroke="#555" stroke-width="0.9" stroke-dasharray="3 2.500"');

// notes
text(449, 14, 'note orange', '2021');
text(362, 152, 'note orange', '2020');
text(514, 137, 'note orange', 'T11/2022');
text(639, 128, 'note orange', 'T4/2025');
text(724, 101, 'note green', 'NKG vẫn loanh quanh');
text(722, 111, 'note green', 'đáy dài hạn');
text(446, 228, 'note purple', 'VNINDEX tăng mạnh');
text(446, 238, 'note purple', 'vượt đỉnh lịch sử');

// axis tags
tag(priceY(16.7), '#089981', '16.70');
tag(246.5, '#f23645', '1599.10');
tag(256.5, '#673ab7', '1518.65');
out += '<rect x="608" y="330" width="58" height="15" fill="#000"/>';
out += '<text x="637" y="341" class="tag-text" text-anchor="middle">01 Tháng 4 \'25</text>';

// axis settings
out += '<path d="M859.500 334.500H864.500L867 339L864.500 343.500H859.500L857 339Z" fill="none" stroke="#555" stroke-width="0.9"/><circle cx="862" cy="339" r="1.500" fill="none" stroke="#555"/>';

// watermark
out += '<circle cx="17.500" cy="312" r="10" fill="#fff" stroke="#dfe2ea"/>';
out += '<g fill="#111"><path d="M11 309H17V316H14V312H11Z"/><circle cx="19" cy="310.500" r="1.500"/><path d="M21.500 309H24.500L21.500 316H18.500Z"/></g>';

plot.innerHTML = out;
```
